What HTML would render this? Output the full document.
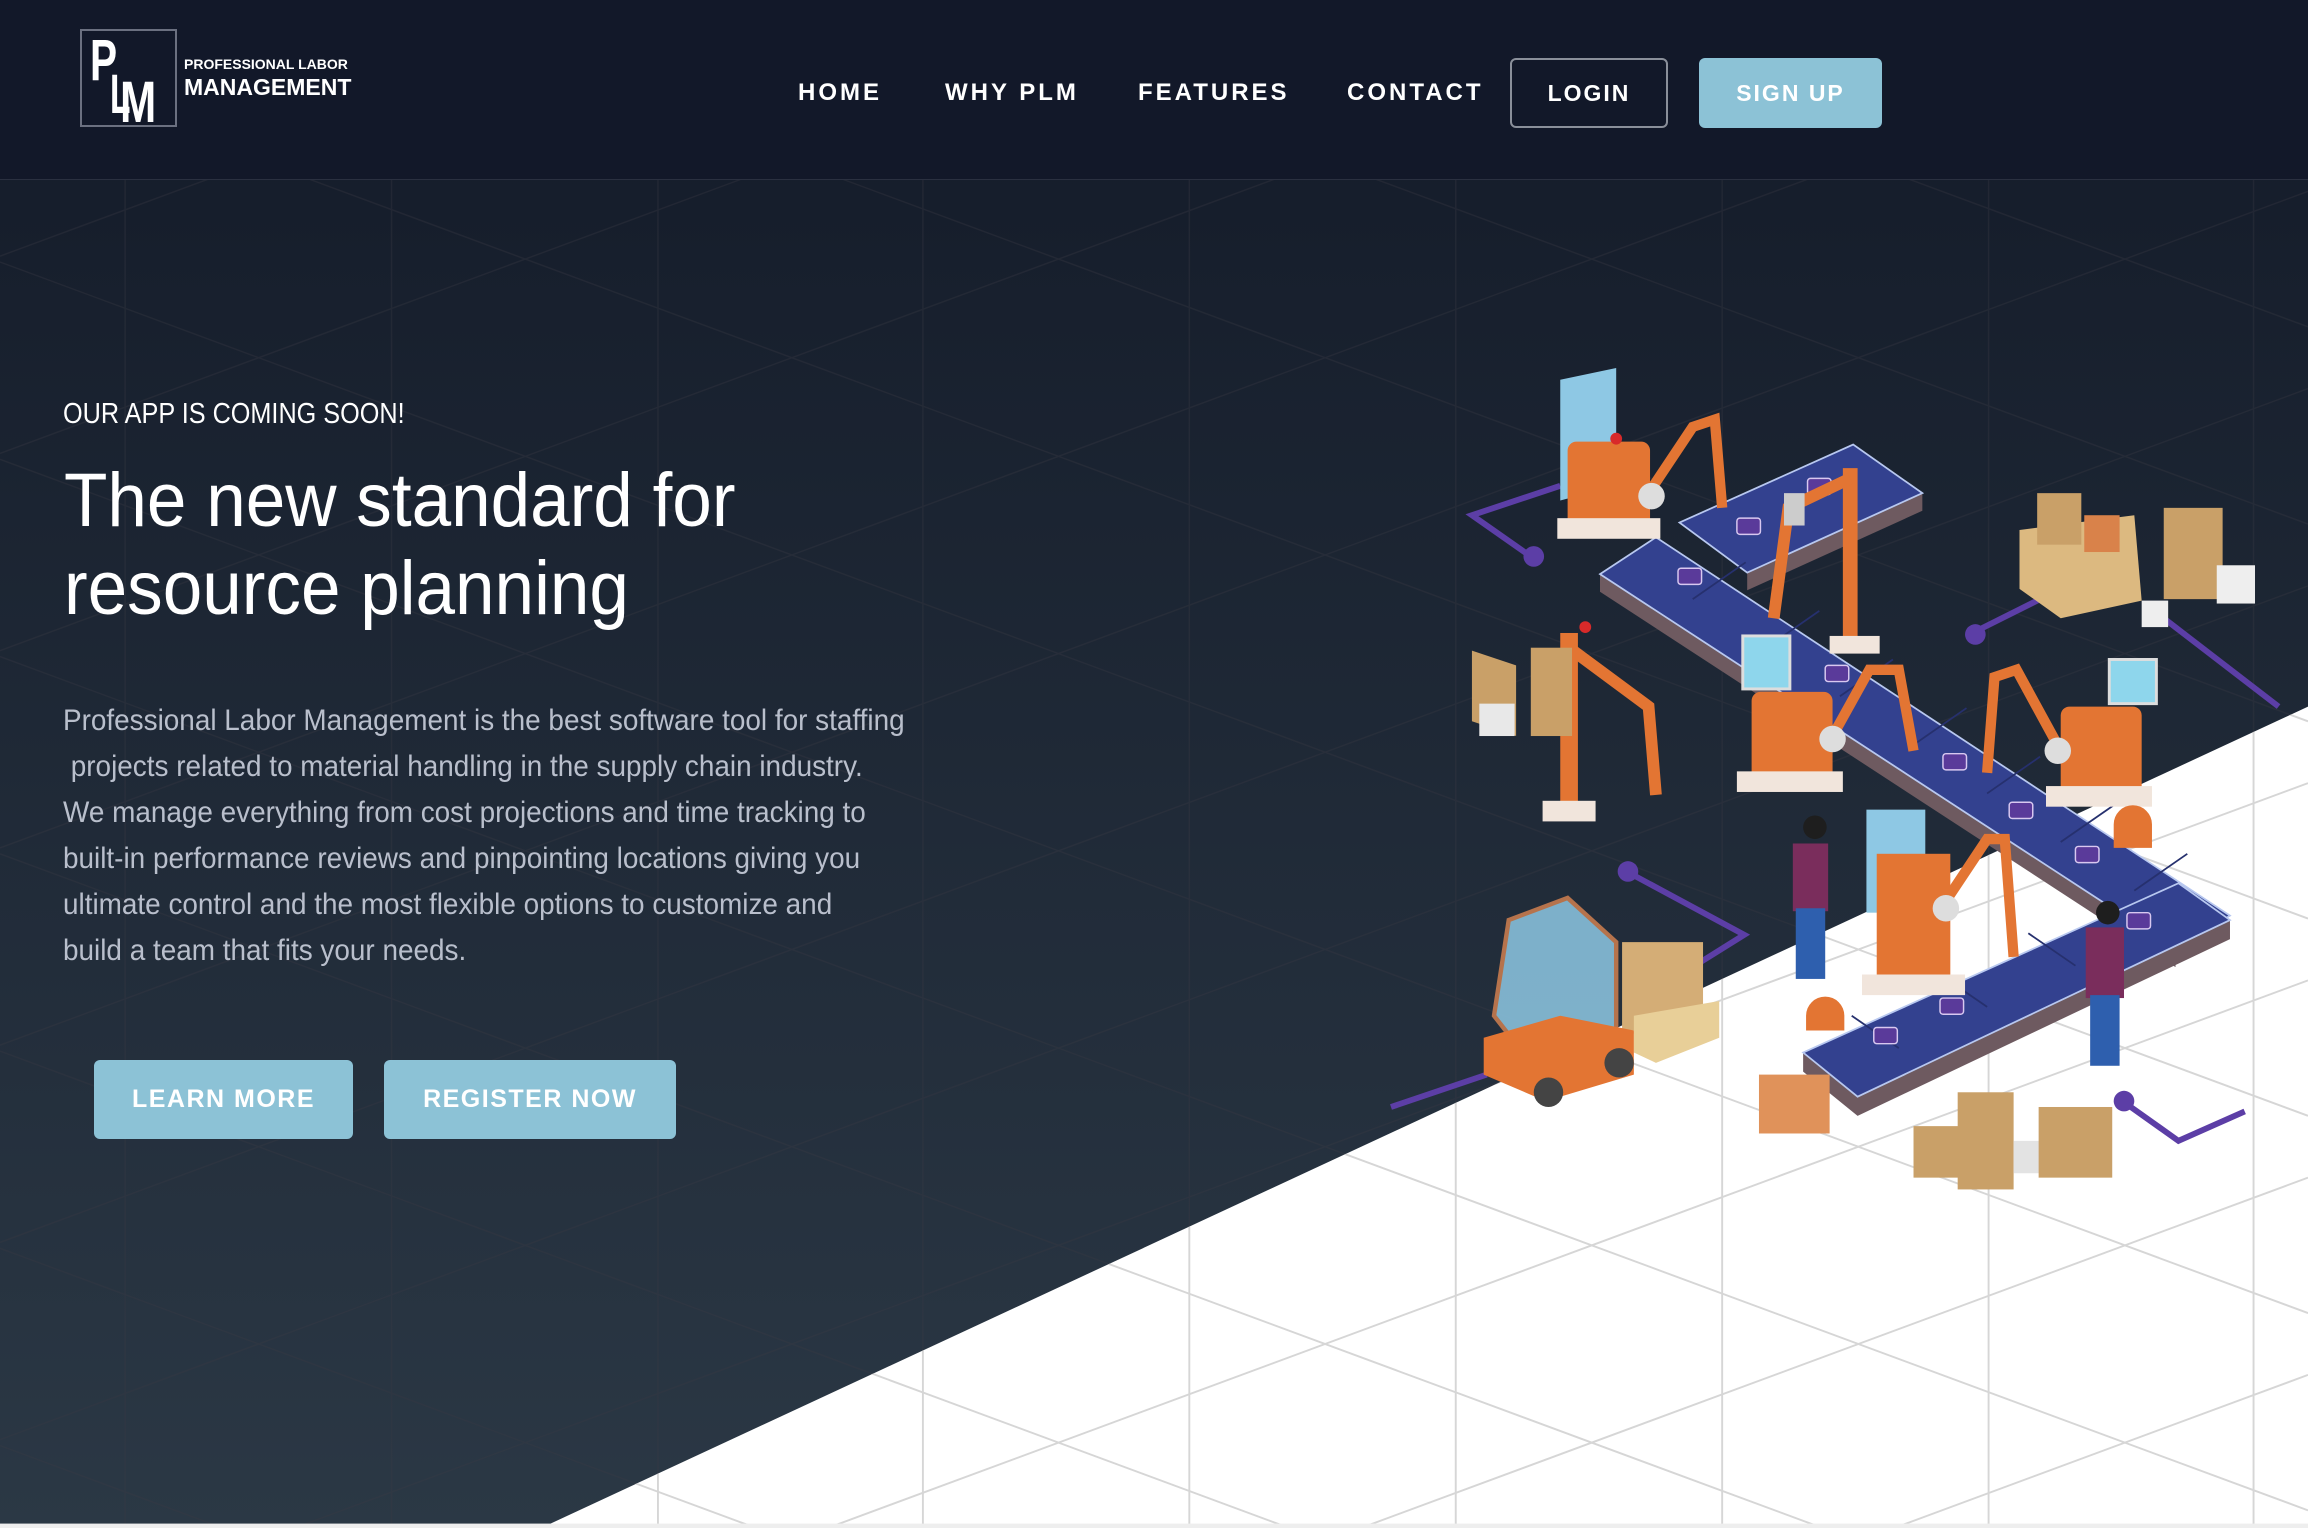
<!DOCTYPE html>
<html><head><meta charset="utf-8">
<style>
*{margin:0;padding:0;box-sizing:border-box}
html,body{width:2308px;height:1528px;overflow:hidden;background:#121829;font-family:"Liberation Sans",sans-serif;position:relative}
#bg{position:absolute;left:0;top:0;width:2308px;height:1528px}
.nav{position:absolute;left:0;top:0;width:2308px;height:180px;background:#121829;border-bottom:1px solid #2a3040}
.logo{position:absolute;left:80px;top:29px;width:97px;height:98px;border:2px solid #6b7080;overflow:hidden}
.logo .p{position:absolute;left:8px;top:-4px;color:#fff;font:bold 58px "Liberation Sans",sans-serif;transform:scaleX(.7);transform-origin:left}
.logo .l{position:absolute;left:28px;top:30px;color:#fff;font:bold 56px "Liberation Sans",sans-serif;transform:scaleX(.6);transform-origin:left}
.logo .m{position:absolute;left:38px;top:38px;color:#fff;font:bold 58px "Liberation Sans",sans-serif;transform:scaleX(.75);transform-origin:left}
.lt1{position:absolute;left:184px;top:56px;color:#fff;font:bold 14px "Liberation Sans",sans-serif}
.lt2{position:absolute;left:184px;top:74px;color:#fff;font:bold 23px "Liberation Sans",sans-serif}
.ni{position:absolute;top:78px;color:#fff;font-size:24px;letter-spacing:3px;font-weight:bold;line-height:30px}
.btn{position:absolute;border-radius:6px;color:#fff;font-weight:bold;text-align:center}
.hero{position:absolute;color:#fff;white-space:nowrap;transform-origin:left top}
.para div{height:46px}
</style></head><body>
<svg id="bg" viewBox="0 0 1568 1038" preserveAspectRatio="none" xmlns="http://www.w3.org/2000/svg">
<defs>
<linearGradient id="g" x1="0" y1="0" x2="0" y2="1"><stop offset="0" stop-color="#131a28"/><stop offset="1" stop-color="#2b3845"/></linearGradient>
<clipPath id="fl"><polygon points="374,1035 1568,480 1568,1038 374,1038"/></clipPath>
<g id="grid">
<line x1="85" y1="0" x2="85" y2="1038"/><line x1="266" y1="0" x2="266" y2="1038"/><line x1="447" y1="0" x2="447" y2="1038"/><line x1="627" y1="0" x2="627" y2="1038"/><line x1="808" y1="0" x2="808" y2="1038"/><line x1="989" y1="0" x2="989" y2="1038"/><line x1="1170" y1="0" x2="1170" y2="1038"/><line x1="1351" y1="0" x2="1351" y2="1038"/><line x1="1531" y1="0" x2="1531" y2="1038"/>
<line x1="0" y1="40" x2="1568" y2="-540"/><line x1="0" y1="174" x2="1568" y2="-406"/><line x1="0" y1="308" x2="1568" y2="-272"/><line x1="0" y1="442" x2="1568" y2="-138"/><line x1="0" y1="576" x2="1568" y2="-4"/><line x1="0" y1="710" x2="1568" y2="130"/><line x1="0" y1="844" x2="1568" y2="264"/><line x1="0" y1="978" x2="1568" y2="398"/><line x1="0" y1="1112" x2="1568" y2="532"/><line x1="0" y1="1246" x2="1568" y2="666"/><line x1="0" y1="1380" x2="1568" y2="800"/><line x1="0" y1="1514" x2="1568" y2="934"/>
<line x1="0" y1="-492" x2="1568" y2="88"/><line x1="0" y1="-358" x2="1568" y2="222"/><line x1="0" y1="-224" x2="1568" y2="356"/><line x1="0" y1="-90" x2="1568" y2="490"/><line x1="0" y1="44" x2="1568" y2="624"/><line x1="0" y1="178" x2="1568" y2="758"/><line x1="0" y1="312" x2="1568" y2="892"/><line x1="0" y1="446" x2="1568" y2="1026"/><line x1="0" y1="580" x2="1568" y2="1160"/><line x1="0" y1="714" x2="1568" y2="1294"/><line x1="0" y1="848" x2="1568" y2="1428"/><line x1="0" y1="982" x2="1568" y2="1562"/>
</g>
</defs>
<rect width="1568" height="1038" fill="url(#g)"/>
<use href="#grid" stroke="#3a3a44" stroke-width="1" opacity=".35"/>
<polygon points="374,1035 1568,480 1568,1038 374,1038" fill="#fff"/>
<use href="#grid" stroke="#d6d6d6" stroke-width="1.3" clip-path="url(#fl)"/>
<rect x="0" y="1035" width="1568" height="3" fill="#eeeeee"/>
<g stroke="#5c3ea6" stroke-width="4" fill="none">
<polyline points="1060,330 1000,350 1040,378"/><polyline points="1340,430 1400,400"/><polyline points="1470,420 1548,480"/><polyline points="1105,592 1185,635 1145,660"/><polyline points="945,752 1010,730"/><polyline points="1442,748 1480,775 1525,755"/>
</g>
<g fill="#5c3ea6"><circle cx="1042" cy="378" r="7"/><circle cx="1342" cy="431" r="7"/><circle cx="1106" cy="592" r="7"/><circle cx="1443" cy="748" r="7"/></g>
<g>
<polygon points="1087,390 1087,402 1478,657 1478,645" fill="#6e5a60"/>
<polygon points="1087,390 1125,365 1515,622 1478,645" fill="#33418f" stroke="#b8c8f0" stroke-width="1.2"/>
<polygon points="1187,389 1187,401 1306,347 1306,335" fill="#6e5a60"/>
<polygon points="1141,355 1259,302 1306,335 1187,389" fill="#33418f" stroke="#b8c8f0" stroke-width="1.2"/>
<polygon points="1225,715 1225,728 1262,758 1515,638 1515,625 1262,745" fill="#6e5a60"/>
<polygon points="1225,715 1480,600 1515,625 1262,745" fill="#33418f" stroke="#b8c8f0" stroke-width="1.2"/>
<g stroke="#26306e" stroke-width="1.2">
<line x1="1150" y1="407" x2="1186" y2="382"/><line x1="1200" y1="440" x2="1236" y2="415"/><line x1="1250" y1="473" x2="1286" y2="448"/><line x1="1300" y1="506" x2="1336" y2="481"/><line x1="1350" y1="539" x2="1386" y2="514"/><line x1="1400" y1="572" x2="1436" y2="547"/><line x1="1450" y1="605" x2="1486" y2="580"/>
<line x1="1290" y1="712" x2="1258" y2="690"/><line x1="1350" y1="684" x2="1318" y2="662"/><line x1="1410" y1="656" x2="1378" y2="634"/>
</g>
<g fill="#5a3a9a" stroke="#d8c8f0" stroke-width="1"><rect x="1140" y="386" width="16" height="11" rx="2"/><rect x="1180" y="352" width="16" height="11" rx="2"/><rect x="1228" y="325" width="16" height="11" rx="2"/><rect x="1240" y="452" width="16" height="11" rx="2"/><rect x="1320" y="512" width="16" height="11" rx="2"/><rect x="1365" y="545" width="16" height="11" rx="2"/><rect x="1410" y="575" width="16" height="11" rx="2"/><rect x="1273" y="698" width="16" height="11" rx="2"/><rect x="1318" y="678" width="16" height="11" rx="2"/><rect x="1445" y="620" width="16" height="11" rx="2"/></g>
</g>
<g>
<polygon points="1060,258 1098,250 1098,330 1060,340" fill="#8ec8e4"/>
<rect x="1065" y="300" width="56" height="58" rx="6" fill="#e37533"/><rect x="1058" y="352" width="70" height="14" fill="#f1e5dc"/>
<polyline points="1120,335 1150,290 1165,285 1170,345" stroke="#e37533" stroke-width="7" fill="none"/>
<circle cx="1122" cy="337" r="9" fill="#ddd"/><circle cx="1098" cy="298" r="4" fill="#d82a2a"/>
<rect x="1252" y="318" width="10" height="120" fill="#e37533"/><polyline points="1257,325 1215,345 1205,420" stroke="#e37533" stroke-width="8" fill="none"/><rect x="1243" y="432" width="34" height="12" fill="#f1e5dc"/><rect x="1212" y="335" width="14" height="22" fill="#ccc"/>
<rect x="1190" y="470" width="55" height="62" rx="6" fill="#e37533"/><rect x="1180" y="524" width="72" height="14" fill="#f1e5dc"/><rect x="1184" y="432" width="32" height="36" fill="#8ed6ec" stroke="#ddd" stroke-width="2"/>
<polyline points="1245,500 1270,455 1290,455 1300,510" stroke="#e37533" stroke-width="7" fill="none"/><circle cx="1245" cy="502" r="9" fill="#ddd"/>
<rect x="1400" y="480" width="55" height="62" rx="6" fill="#e37533"/><rect x="1390" y="534" width="72" height="14" fill="#f1e5dc"/><rect x="1433" y="448" width="32" height="30" fill="#8ed6ec" stroke="#ddd" stroke-width="2"/>
<polyline points="1400,510 1370,455 1355,460 1350,525" stroke="#e37533" stroke-width="7" fill="none"/><circle cx="1398" cy="510" r="9" fill="#ddd"/>
<rect x="1060" y="430" width="12" height="120" fill="#e37533"/><polyline points="1066,440 1120,480 1125,540" stroke="#e37533" stroke-width="8" fill="none"/><rect x="1048" y="544" width="36" height="14" fill="#f1e5dc"/><circle cx="1077" cy="426" r="4" fill="#d82a2a"/>
<rect x="1268" y="550" width="40" height="70" fill="#8ec8e4"/><rect x="1275" y="580" width="50" height="90" fill="#e37533"/><rect x="1265" y="662" width="70" height="14" fill="#f1e5dc"/>
<polyline points="1320,615 1350,570 1362,570 1368,650" stroke="#e37533" stroke-width="7" fill="none"/><circle cx="1322" cy="617" r="9" fill="#ddd"/>
<path d="M1227,690 a13,13 0 0 1 26,0 v10 h-26z" fill="#e37533"/><path d="M1436,560 a13,13 0 0 1 26,0 v16 h-26z" fill="#e37533"/>
</g>
<g>
<polygon points="1000,442 1030,452 1030,500 1000,490" fill="#c9a068"/><rect x="1040" y="440" width="28" height="60" fill="#c9a068"/><rect x="1005" y="478" width="24" height="22" fill="#e8e8e8"/>
<polygon points="1372,360 1450,350 1455,408 1400,420 1372,400" fill="#dcb980"/><rect x="1384" y="335" width="30" height="35" fill="#c9a068"/><rect x="1416" y="350" width="24" height="25" fill="#d9824a"/>
<rect x="1470" y="345" width="40" height="62" fill="#c9a068"/><rect x="1506" y="384" width="26" height="26" fill="#eeeeee"/><rect x="1455" y="408" width="18" height="18" fill="#eeeeee"/>
<rect x="1102" y="640" width="55" height="60" fill="#d4ad76"/><polygon points="1110,690 1168,680 1168,705 1125,722 1110,715" fill="#e8cf98"/>
<rect x="1195" y="730" width="48" height="40" fill="#e0925a"/>
<rect x="1300" y="765" width="35" height="35" fill="#c9a068"/><rect x="1330" y="742" width="38" height="66" fill="#c9a068"/><rect x="1368" y="775" width="20" height="22" fill="#e3e3e3"/><rect x="1385" y="752" width="50" height="48" fill="#c9a068"/>
</g>
<g>
<polygon points="1025,625 1065,610 1098,640 1098,700 1040,722 1015,690" fill="#8ec8e4" opacity=".85" stroke="#d08050" stroke-width="3"/>
<polygon points="1008,705 1060,690 1110,700 1110,730 1050,748 1008,730" fill="#e37533"/><circle cx="1052" cy="742" r="10" fill="#444"/><circle cx="1100" cy="722" r="10" fill="#444"/>
</g>
<g>
<rect x="1218" y="573" width="24" height="46" fill="#7a2d5c"/><rect x="1220" y="617" width="20" height="48" fill="#2e5fae"/><circle cx="1233" cy="562" r="8" fill="#1e1e1e"/>
<rect x="1417" y="630" width="26" height="48" fill="#7a2d5c"/><rect x="1420" y="676" width="20" height="48" fill="#2e5fae"/><circle cx="1432" cy="620" r="8" fill="#1e1e1e"/>
</g>
</svg>

<div class="nav">
 <div class="logo"><span class="p">P</span><span class="l">L</span><span class="m">M</span></div>
 <div class="lt1">PROFESSIONAL LABOR</div>
 <div class="lt2">MANAGEMENT</div>
 <div class="ni" style="left:798px">HOME</div>
 <div class="ni" style="left:945px">WHY PLM</div>
 <div class="ni" style="left:1138px">FEATURES</div>
 <div class="ni" style="left:1347px">CONTACT</div>
 <div class="btn" style="left:1510px;top:58px;width:158px;height:70px;border:2px solid #8a8f9a;font-size:23px;line-height:66px;letter-spacing:2px">LOGIN</div>
 <div class="btn" style="left:1699px;top:58px;width:183px;height:70px;background:#8cc2d6;font-size:23px;line-height:70px;letter-spacing:2px">SIGN UP</div>
</div>

<div class="hero" style="left:63px;top:398px;font-size:29px;transform:scaleX(.87)">OUR APP IS COMING SOON!</div>
<div class="hero" style="left:64px;top:457px;font-size:76px;line-height:88px;transform:scaleX(.935)">The new standard for<br>resource planning</div>
<div class="hero para" style="left:63px;top:698px;font-size:30px;line-height:46px;color:#b9bfcc;transform:scaleX(.93)">
<div>Professional Labor Management is the best software tool for staffing</div>
<div>&nbsp;projects related to material handling in the supply chain industry.</div>
<div>We manage everything from cost projections and time tracking to</div>
<div>built-in performance reviews and pinpointing locations giving you</div>
<div>ultimate control and the most flexible options to customize and</div>
<div>build a team that fits your needs.</div>
</div>
<div class="btn" style="left:94px;top:1060px;width:259px;height:79px;background:#8cc2d6;font-size:25px;line-height:79px;letter-spacing:1.5px">LEARN MORE</div>
<div class="btn" style="left:384px;top:1060px;width:292px;height:79px;background:#8cc2d6;font-size:25px;line-height:79px;letter-spacing:1.5px">REGISTER NOW</div>
</body></html>
